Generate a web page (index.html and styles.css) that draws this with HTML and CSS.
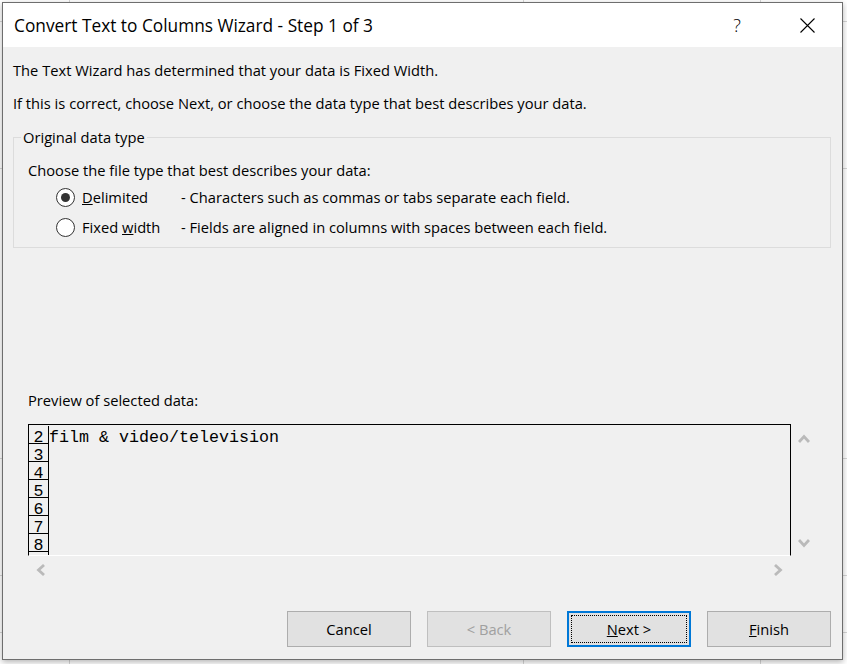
FILE: index.html
```html
<!DOCTYPE html>
<html lang="en">
<head>
<meta charset="utf-8">
<title>Convert Text to Columns Wizard</title>
<link rel="stylesheet" href="styles.css">
</head>
<body>
<div class="desk">
  <div class="dialog">
    <header class="titlebar">
      <span class="title">Convert Text to Columns Wizard - Step 1 of 3</span>
      <span class="help">?</span>
      <svg class="close" width="15" height="15" viewBox="0 0 15 15"><path d="M0.5 0.5 L14.5 14.5 M14.5 0.5 L0.5 14.5" stroke="#000" stroke-width="1.1" fill="none"/></svg>
    </header>
    <main class="content">
      <p class="line first">The Text Wizard has determined that your data is Fixed Width.</p>
      <p class="line second">If this is correct, choose Next, or choose the data type that best describes your data.</p>
      <fieldset class="group">
        <legend>Original data type</legend>
        <p class="line">Choose the file type that best describes your data:</p>
        <div class="options">
          <div class="opt"><span class="radio checked"></span><span class="label"><u>D</u>elimited</span><span class="desc">- Characters such as commas or tabs separate each field.</span></div>
          <div class="opt"><span class="radio"></span><span class="label">Fixed <u>w</u>idth</span><span class="desc">- Fields are aligned in columns with spaces between each field.</span></div>
        </div>
      </fieldset>
      <p class="line preview-label">Preview of selected data:</p>
      <div class="preview">
        <div class="box">
          <div class="row"><span class="num">2</span><span class="data">film &amp; video/television</span></div>
          <div class="row"><span class="num">3</span><span class="data"></span></div>
          <div class="row"><span class="num">4</span><span class="data"></span></div>
          <div class="row"><span class="num">5</span><span class="data"></span></div>
          <div class="row"><span class="num">6</span><span class="data"></span></div>
          <div class="row"><span class="num">7</span><span class="data"></span></div>
          <div class="row"><span class="num">8</span><span class="data"></span></div>
          <div class="row"><span class="num"></span><span class="data"></span></div>
        </div>
        <div class="vscroll">
          <span class="arrow up"><svg width="12" height="9" viewBox="0 0 12 9"><polyline points="1,8 6,2.5 11,8" stroke="#bababa" stroke-width="2.8" fill="none"/></svg></span>
          <span class="arrow down"><svg width="12" height="9" viewBox="0 0 12 9"><polyline points="1,1 6,6.5 11,1" stroke="#bababa" stroke-width="2.8" fill="none"/></svg></span>
        </div>
        <div class="hscroll">
          <span class="arrow left"><svg width="9" height="12" viewBox="0 0 9 12"><polyline points="8,1 2.5,6 8,11" stroke="#bababa" stroke-width="2.8" fill="none"/></svg></span>
          <span class="arrow right"><svg width="9" height="12" viewBox="0 0 9 12"><polyline points="1,1 6.5,6 1,11" stroke="#bababa" stroke-width="2.8" fill="none"/></svg></span>
        </div>
        <div class="corner"></div>
      </div>
      <div class="buttons">
        <button class="btn">Cancel</button>
        <button class="btn disabled">&lt; Back</button>
        <button class="btn default"><u>N</u>ext &gt;</button>
        <button class="btn"><u>F</u>inish</button>
      </div>
    </main>
  </div>
</div>
</body>
</html>
```
FILE: styles.css
```css
* { box-sizing: border-box; }
html, body { margin: 0; padding: 0; }
body {
  width: 847px;
  height: 664px;
  overflow: hidden;
  font-family: "Open Sans", "Noto Sans", sans-serif;
  font-size: 14.7px;
  color: #000;
}
.desk {
  width: 847px;
  height: 664px;
  padding: 2px 0 0 2px;
  background-color: #fff;
  background-image:
    linear-gradient(to right, transparent 69px, #d6d6d6 69px 70px, transparent 70px 523px, #d6d6d6 523px 524px, transparent 524px 760px, #d6d6d6 760px 761px, transparent 761px),
    linear-gradient(to bottom, transparent 21px, #d6d6d6 21px 22px, transparent 22px 168px, #d6d6d6 168px 169px, transparent 169px 458px, #d6d6d6 458px 459px, transparent 459px 575px, #d6d6d6 575px 576px, transparent 576px 632px, #d6d6d6 632px 633px, transparent 633px);
}
.dialog {
  width: 841px;
  height: 658px;
  border: 1px solid #6e6e6e;
  background: #f0f0f0;
  box-shadow: 0 2px 6px rgba(0, 0, 0, 0.3);
  display: flex;
  flex-direction: column;
}
.titlebar {
  height: 44px;
  flex: none;
  background: #fff;
  display: flex;
  align-items: center;
  padding: 0 27px 0 11px;
}
.title { flex: 1; font-size: 17.3px; }
.help {
  width: 20px;
  text-align: center;
  font-size: 18px;
  font-weight: 300;
  margin-right: 53px;
}
.close { display: block; width: 15px; height: 15px; }
.content {
  flex: 1;
  padding: 0 11px 0 10px;
  display: flex;
  flex-direction: column;
}
.line { margin: 0; line-height: 20px; }
.first { margin-top: 13px; }
.second { margin-top: 13px; }
.group {
  margin: 14px 0 0;
  padding: 13px 0 5px 14px;
  border: 1px solid #dcdcdc;
  min-width: 0;
}
.group legend {
  margin-left: -7px;
  padding: 0 2px;
  line-height: 20px;
}
.options { margin: 2px 0 0 28px; }
.opt {
  display: grid;
  grid-template-columns: 26px 99px 1fr;
  align-items: center;
  height: 30px;
}
.radio {
  width: 19px;
  height: 19px;
  border: 1px solid #333;
  border-radius: 50%;
  background: #fff;
  display: flex;
  align-items: center;
  justify-content: center;
}
.radio.checked::after {
  content: "";
  width: 9px;
  height: 9px;
  border-radius: 50%;
  background: #333;
}
.preview-label { margin: 142px 0 0 15px; }
.preview {
  margin: 14px 0 0 15px;
  display: grid;
  grid-template-columns: 763px 26px;
  grid-template-rows: 132px 27px;
}
.box {
  border: 1px solid #000;
  border-bottom-color: #fff;
  padding-top: 1px;
  overflow: hidden;
  font-family: "Liberation Mono", "Courier New", monospace;
  font-size: 16.67px;
}
.row { display: flex; height: 18px; }
.num {
  width: 20px;
  height: 18px;
  flex: none;
  border-right: 1px solid #000;
  border-bottom: 1px solid #000;
  text-align: center;
  padding-top: 3px;
  line-height: 17px;
}
.data {
  padding-top: 3px;
  line-height: 17px;
  white-space: pre;
}
.vscroll {
  display: flex;
  flex-direction: column;
  justify-content: space-between;
}
.vscroll .arrow { display: flex; align-items: center; justify-content: center; }
.vscroll .up { height: 29px; }
.vscroll .down { height: 26px; }
.hscroll {
  display: flex;
  justify-content: space-between;
  align-items: center;
}
.hscroll .arrow { width: 25px; display: flex; justify-content: center; }
.arrow svg { display: block; }
.buttons {
  margin-top: 28px;
  display: flex;
  justify-content: flex-end;
  gap: 16px;
}
.btn {
  width: 124px;
  height: 36px;
  border: 1px solid #adadad;
  background: #e1e1e1;
  font-family: inherit;
  font-size: 14.7px;
  color: #000;
  padding: 0;
}
.btn.disabled { color: #a0a0a0; border-color: #bfbfbf; }
.btn.default {
  border: 2px solid #0078d7;
  outline: 1px dotted #000;
  outline-offset: -5px;
}
```
